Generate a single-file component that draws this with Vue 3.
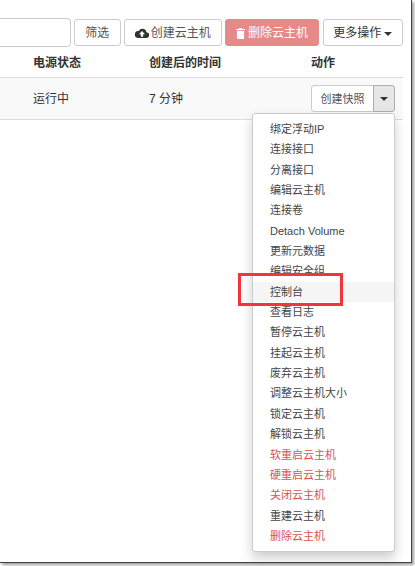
<template>
  <div class="shot">
    <div class="page">
      <div class="toolbar">
        <div class="search"></div>
        <button class="btn filter" type="button"><span class="lbl">筛选</span></button>
        <button class="btn create" type="button">
          <svg class="ico" viewBox="0 0 16 12" width="14" height="11">
            <path d="M13 4.600A4.600 4.600 0 0 0 4.300 3.200 3 3 0 0 0 3 11h10a3.200 3.200 0 0 0 0-6.400zM8 3.200l3.400 3.600H9.300v3H6.700v-3H4.600z" fill="#333" fill-rule="evenodd" />
          </svg>
          <span class="lbl">创建云主机</span>
        </button>
        <button class="btn danger" type="button">
          <svg class="ico" viewBox="0 0 10 12" width="9" height="11">
            <path d="M3.500 0h3l.5 1h3v1.200H0V1h3zM1 3h8v8a1 1 0 0 1-1 1H2a1 1 0 0 1-1-1z" fill="#fff" />
          </svg>
          <span class="lbl">删除云主机</span>
        </button>
        <button class="btn more" type="button"><span class="lbl">更多操作</span><span class="caret"></span></button>
      </div>

      <div class="thead">
        <span class="c1">电源状态</span>
        <span class="c2">创建后的时间</span>
        <span class="c3">动作</span>
      </div>
      <div class="trow">
        <span class="c1 cell">运行中</span>
        <span class="c2 cell">7 分钟</span>
        <div class="c3 split">
          <button class="snap" type="button"><span class="lbl">创建快照</span></button>
          <button class="toggle" type="button"><span class="caret"></span></button>
        </div>
      </div>

      <ul class="menu">
        <li v-for="it in items" :key="it.label" :class="{ red: it.red, hover: it.hover }">{{ it.label }}</li>
      </ul>

      <div class="mark"></div>
    </div>
  </div>
</template>

<script setup>
const items = [
  { label: "绑定浮动IP" },
  { label: "连接接口" },
  { label: "分离接口" },
  { label: "编辑云主机" },
  { label: "连接卷" },
  { label: "Detach Volume" },
  { label: "更新元数据" },
  { label: "编辑安全组" },
  { label: "控制台", hover: true },
  { label: "查看日志" },
  { label: "暂停云主机" },
  { label: "挂起云主机" },
  { label: "废弃云主机" },
  { label: "调整云主机大小" },
  { label: "锁定云主机" },
  { label: "解锁云主机" },
  { label: "软重启云主机", red: true },
  { label: "硬重启云主机", red: true },
  { label: "关闭云主机", red: true },
  { label: "重建云主机" },
  { label: "删除云主机", red: true },
];
</script>

<style>
html, body { margin: 0; background: #fff; }
</style>

<style scoped>
.shot {
  width: 415px;
  height: 566px;
  overflow: hidden;
  background: #fff;
  font-family: "Liberation Sans", "Noto Sans CJK SC", sans-serif;
  font-size: 12px;
  color: #333;
}

.page {
  position: relative;
  width: 412px;
  height: 563px;
  background: #fff;
  border-right: 1px solid #444;
  border-bottom: 1px solid #444;
  box-sizing: border-box;
  box-shadow: 2px 2px 3px rgba(0, 0, 0, 0.4);
  padding-top: 18px;
}

.toolbar {
  display: flex;
  align-items: center;
  gap: 3.500px;
  height: 28px;
}

.search {
  width: 71.500px;
  height: 29px;
  flex: none;
  margin-left: -1px;
  box-sizing: border-box;
  border: 1px solid #ccc;
  border-left: 0;
  border-radius: 0 4px 4px 0;
}

.btn {
  height: 27px;
  flex: none;
  box-sizing: border-box;
  border: 1px solid #ccc;
  border-radius: 3px;
  background: #fff;
  color: #333;
  font: inherit;
  padding: 0;
  white-space: nowrap;
}

.lbl { position: relative; top: -1px; }

.filter { width: 46.500px; color: #555; }
.create { width: 97.500px; color: #555; }
.more { width: 80.500px; }

.danger {
  width: 94px;
  background: #e58a88;
  border-color: #e58a88;
  color: #fff;
}

.ico { vertical-align: -1px; margin-right: 2px; }
.danger .ico { margin-right: 3px; }

.caret {
  display: inline-block;
  width: 0;
  height: 0;
  margin-left: 3px;
  vertical-align: middle;
  border-top: 4px solid #333;
  border-left: 4px solid transparent;
  border-right: 4px solid transparent;
}

.thead, .trow {
  display: grid;
  grid-template-columns: 33px 116px 162px 1fr;
  width: 403px;
  box-sizing: border-box;
  align-items: center;
}

.c1 { grid-column: 2; }
.c2 { grid-column: 3; }
.c3 { grid-column: 4; }

.thead {
  height: 32px;
  border-bottom: 1px solid #ddd;
  font-weight: 700;
}

.trow {
  height: 42px;
  background: #f9f9f9;
  border-bottom: 1px solid #ddd;
}

.cell { padding-bottom: 3px; }

.split { display: flex; }

.snap {
  width: 63px;
  height: 27px;
  box-sizing: border-box;
  border: 1px solid #ccc;
  border-radius: 3px 0 0 3px;
  background: #fff;
  font: inherit;
  font-size: 11px;
  color: #555;
  padding: 0;
}

.toggle {
  width: 22px;
  height: 27px;
  box-sizing: border-box;
  margin-left: -1px;
  border: 1px solid #adadad;
  border-radius: 0 3px 3px 0;
  background: #e6e6e6;
  padding: 0;
}

.toggle .caret { margin-left: 0; }

.menu {
  position: absolute;
  left: 252px;
  top: 113px;
  width: 142.500px;
  height: 439px;
  box-sizing: border-box;
  margin: 0;
  padding: 5px 0;
  list-style: none;
  background: #fff;
  border: 1px solid #ccc;
  border-radius: 3px;
  box-shadow: 0 6px 12px rgba(0, 0, 0, 0.2);
  font-size: 11px;
}

.menu li {
  height: 20.350px;
  line-height: 20px;
  padding-left: 17px;
  white-space: nowrap;
  color: #444;
}

.menu li.red { color: #d9534f; }
.menu li.hover { background: #f5f5f5; }

.mark {
  position: absolute;
  left: 238px;
  top: 273px;
  width: 105px;
  height: 33px;
  box-sizing: border-box;
  border: 3px solid #f1353a;
}
</style>
